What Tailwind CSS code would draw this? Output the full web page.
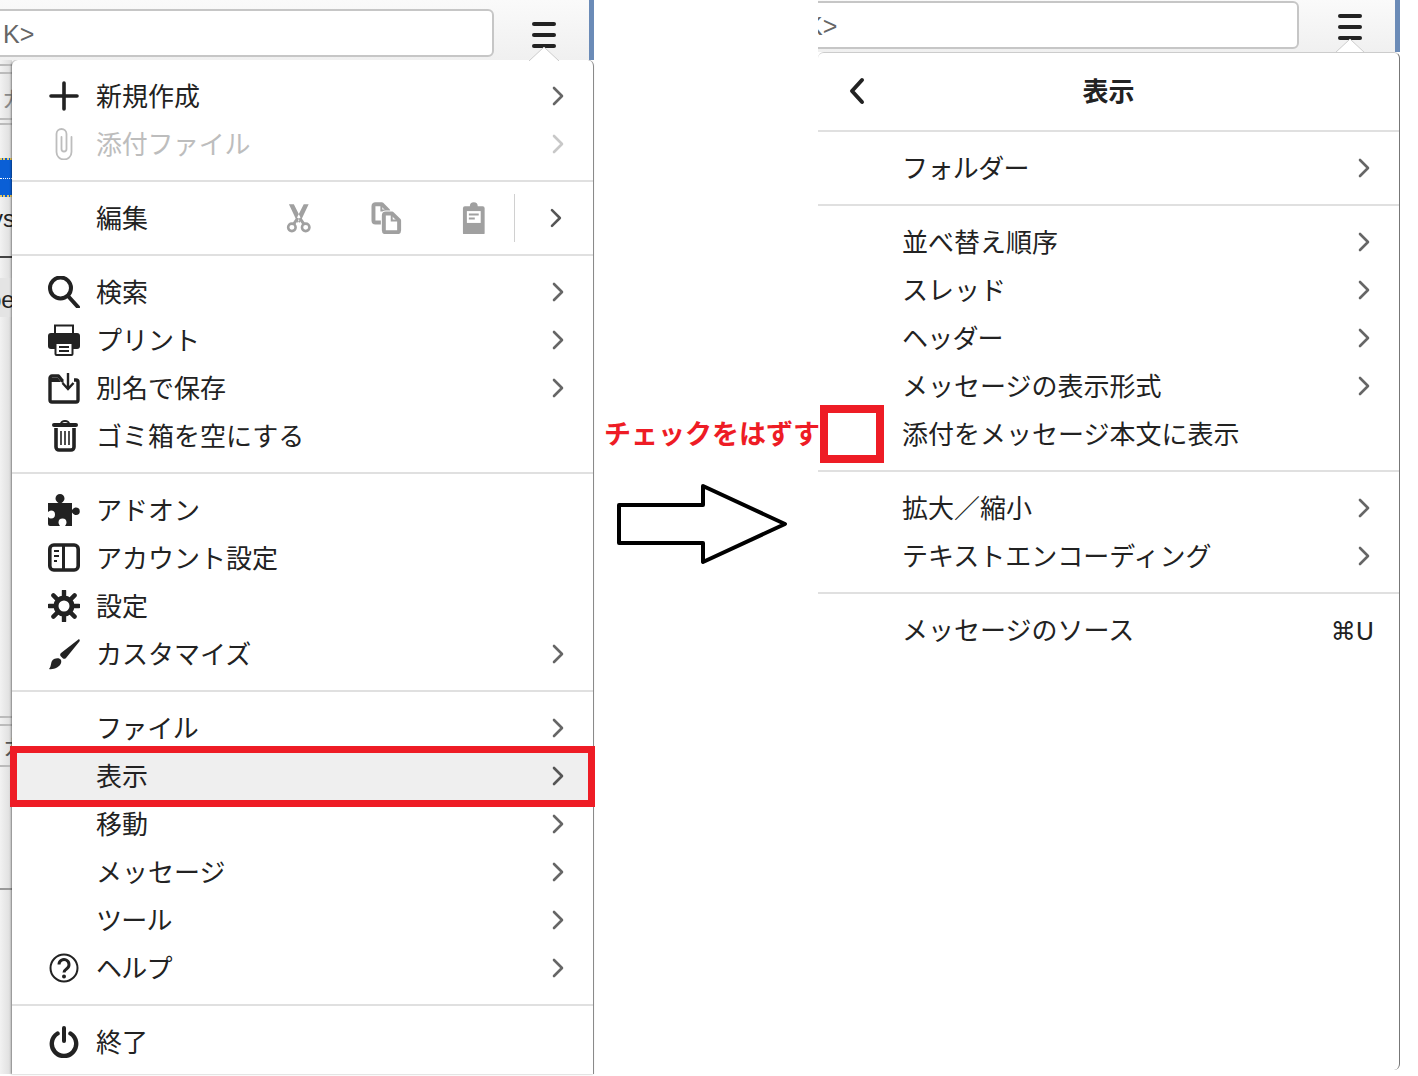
<!DOCTYPE html>
<html lang="ja">
<head>
<meta charset="UTF-8">
<title>表示メニュー</title>
<script src="https://cdn.jsdelivr.net/npm/@tailwindcss/browser@4"></script>
</head>
<body class="bg-white">
<svg class="hidden">
  <symbol id="chev" viewBox="0 0 12 20"><path d="M2 2l8 8-8 8" fill="none" stroke="currentColor" stroke-width="2.6" stroke-linecap="round" stroke-linejoin="round"/></symbol>
</svg>

<div class="w-[1418px] h-[1076px] flex overflow-hidden bg-white text-[#222] text-[26px] font-['Noto_Sans_CJK_JP','Liberation_Sans',sans-serif]">

  <!-- left screenshot -->
  <div class="w-[594px] h-[1074px] flex flex-col shrink-0">
    <div class="relative h-[60px] pt-[9px] flex items-start bg-gradient-to-b from-[#fafafa] to-[#f0f0f0] border-r-[5px] border-[#6b8bb7] z-10">
      <div class="w-[504px] h-[48px] -ml-[10px] pl-[11px] pt-[3px] flex items-center bg-white border-2 border-[#c6c6c6] rounded-md text-[#666] text-[25px] font-['Liberation_Sans',sans-serif]">K&gt;</div>
      <div class="ml-[38px] mt-[13px] w-6 flex flex-col gap-[7px]">
        <span class="h-1 rounded-full bg-[#222]"></span>
        <span class="h-1 rounded-full bg-[#222]"></span>
        <span class="h-1 rounded-full bg-[#222]"></span>
      </div>
      <svg class="absolute left-[529px] top-[46px]" width="30" height="15" viewBox="0 0 30 15"><path d="M0 15L15 1l15 14z" fill="#fff"/><path d="M0 15L15 1l15 14" fill="none" stroke="#ccc"/></svg>
    </div>
    <div class="flex-1 flex min-h-0">
      <!-- what shows of the window behind the menu -->
      <div class="w-3 shrink-0 bg-gradient-to-r from-[#f2f2f2] to-[#dcdcdc] text-[24px] leading-none overflow-hidden flex flex-col text-[#333]">
        <div class="h-[4px]"></div>
        <div class="h-[2px] bg-[#bbb]"></div>
        <div class="h-[6px]"></div>
        <div class="h-[2px] bg-[#bbb]"></div>
        <div class="h-[44px] pt-[12px] pl-[2px] text-[#888] text-[22px] whitespace-nowrap">カ</div>
        <div class="h-[2px] bg-[#bbb]"></div>
        <div class="h-[3px]"></div>
        <div class="h-[2px] bg-[#bbb]"></div>
        <div class="h-[33px]"></div>
        <div class="h-[20px] bg-[#0a5fd6] border-t-2 border-dotted border-[#e8c860]"></div>
        <div class="h-[19px] bg-[#0a5fd6] border-t border-b-2 border-b-[#e8c860] border-t-white border-dotted"></div>
        <div class="h-[59px] pt-[10px] -ml-[9px] font-['Liberation_Sans',sans-serif] font-medium text-[#222] whitespace-nowrap">ys</div>
        <div class="h-[2px] bg-[#444]"></div>
        <div class="h-[20px]"></div>
        <div class="h-[39px] bg-[#e4e4e4] pt-[10px] pl-0 font-['Liberation_Sans',sans-serif] text-[#222] whitespace-nowrap"><span class="-ml-[12px]">pe</span></div>
        <div class="h-[399px]"></div>
        <div class="h-[2px] bg-[#bbb]"></div>
        <div class="h-[6px]"></div>
        <div class="h-[2px] bg-[#bbb]"></div>
        <div class="h-[39px] pl-[3px] pt-[8px] text-[22px] text-[#555] whitespace-nowrap">カ</div>
        <div class="h-[2px] bg-[#bbb]"></div>
        <div class="h-[121px]"></div>
        <div class="h-[2px] bg-[#999]"></div>
      </div>

      <div class="w-[582px] h-full bg-white border-r border-[#8a8a8a] rounded-tl-md rounded-tr-md shadow-[-1px_0_2px_rgba(0,0,0,0.4)] flex flex-col">
        <div class="py-3 border-b-2 border-[#e0e0e0]">
          <div class="flex items-center h-12 pl-9 pr-[29px]">
            <svg class="w-8 h-8 mr-4 shrink-0" viewBox="0 0 32 32"><path d="M16 3v26M3 16h26" stroke="#222" stroke-width="3.6" stroke-linecap="round"/></svg>
            <span class="flex-1 pb-1">新規作成</span>
            <svg class="w-3 h-5 text-[#666]"><use href="#chev"/></svg>
          </div>
          <div class="flex items-center h-12 pl-9 pr-[29px] text-[#bdbdbd]">
            <svg class="w-8 h-8 mr-4 shrink-0" viewBox="0 0 32 32"><path d="M13.500 9v12a2.500 2.500 0 0 0 5 0V6a5 5 0 0 0-10 0v18a7.500 7.500 0 0 0 15 0V9" fill="none" stroke="#bdbdbd" stroke-width="1.800" stroke-linecap="round"/></svg>
            <span class="flex-1 pb-1 tracking-[-0.3px]">添付ファイル</span>
            <svg class="w-3 h-5 text-[#c8c8c8]"><use href="#chev"/></svg>
          </div>
        </div>

        <div class="py-3 border-b-2 border-[#e0e0e0]">
          <div class="flex items-center h-12 pl-[84px] pr-[31px]">
            <span class="w-[190px] pb-1">編集</span>
            <svg class="w-8 h-8" viewBox="0 0 32 32"><g fill="none" stroke="#a0a0a0"><circle cx="9" cy="25.500" r="3.800" stroke-width="2.600"/><circle cx="23" cy="25.500" r="3.800" stroke-width="2.600"/></g><path d="M6 2l5 0 7 14 -3 5zM26 2l-5 0-7 14 3 5z" fill="#a0a0a0"/><path d="M11 22l4-6M21 22l-4-6" stroke="#a0a0a0" stroke-width="3"/></svg>
            <svg class="w-8 h-8 ml-[56px]" viewBox="0 0 32 32"><path d="M4.500 2h6.500l6.500 6.500v10a2 2 0 0 1-2 2h-11a2 2 0 0 1-2-2V4a2 2 0 0 1 2-2z" fill="#fff" stroke="#a0a0a0" stroke-width="4" stroke-linejoin="round"/><path d="M10.500 2v6.500h7" fill="none" stroke="#a0a0a0" stroke-width="2"/><path d="M15 11.500h6.500l7 7v10a2 2 0 0 1-2 2H15a2 2 0 0 1-2-2v-15a2 2 0 0 1 2-2z" fill="#fff" stroke="#fff" stroke-width="6" stroke-linejoin="round"/><path d="M15 11.500h6.500l7 7v10a2 2 0 0 1-2 2H15a2 2 0 0 1-2-2v-15a2 2 0 0 1 2-2z" fill="#fff" stroke="#a0a0a0" stroke-width="4" stroke-linejoin="round"/><path d="M21 12v6.500h7" fill="none" stroke="#a0a0a0" stroke-width="2"/></svg>
            <svg class="w-8 h-8 ml-[55px]" viewBox="0 0 32 32"><path d="M7 4h5a4 4 0 0 1 8 0h5a2 2 0 0 1 2 2v25a2 2 0 0 1-2 2H7a2 2 0 0 1-2-2V6a2 2 0 0 1 2-2z" fill="#a0a0a0"/><rect x="9" y="9" width="14" height="12" fill="#fff"/><path d="M11 12.500h10M11 16.500h6" stroke="#a0a0a0" stroke-width="2"/></svg>
            <span class="w-px h-12 ml-[25px] bg-[#d0d0d0]"></span>
            <svg class="w-3 h-5 ml-[35px] text-[#555]"><use href="#chev"/></svg>
          </div>
        </div>

        <div class="py-3 border-b-2 border-[#e0e0e0]">
          <div class="flex items-center h-12 pl-9 pr-[29px]">
            <svg class="w-8 h-8 mr-4 shrink-0" viewBox="0 0 32 32"><circle cx="12.500" cy="12" r="10.500" fill="none" stroke="#222" stroke-width="4"/><path d="M20 20l10 11" stroke="#222" stroke-width="4" stroke-linecap="round"/></svg>
            <span class="flex-1 pb-1">検索</span>
            <svg class="w-3 h-5 text-[#666]"><use href="#chev"/></svg>
          </div>
          <div class="flex items-center h-12 pl-9 pr-[29px]">
            <svg class="w-8 h-8 mr-4 shrink-0" viewBox="0 0 32 32"><rect x="7" y="1.500" width="18" height="10" fill="none" stroke="#222" stroke-width="2"/><path d="M3 9h26a3 3 0 0 1 3 3v10a3 3 0 0 1-3 3H3a3 3 0 0 1-3-3V12a3 3 0 0 1 3-3z" fill="#222"/><rect x="7.500" y="19" width="17" height="12" rx="1" fill="#fff" stroke="#222" stroke-width="2"/><path d="M11 23h10M11 27h10" stroke="#222" stroke-width="1.800"/></svg>
            <span class="flex-1 pb-1">プリント</span>
            <svg class="w-3 h-5 text-[#666]"><use href="#chev"/></svg>
          </div>
          <div class="flex items-center h-12 pl-9 pr-[29px]">
            <svg class="w-8 h-8 mr-4 shrink-0" viewBox="0 0 32 32"><path d="M15.500 9h-1l-4-5H4a2 2 0 0 0-2 2v22a2 2 0 0 0 2 2h24a2 2 0 0 0 2-2V10a2 2 0 0 0-2-2h-2" fill="none" stroke="#222" stroke-width="3.400" stroke-linejoin="round"/><path d="M2 6h8l3 4H2z" fill="#222"/><path d="M20 1v15M14.500 11l5.500 6 5.500-6" fill="none" stroke="#222" stroke-width="2.400"/></svg>
            <span class="flex-1 pb-1">別名で保存</span>
            <svg class="w-3 h-5 text-[#666]"><use href="#chev"/></svg>
          </div>
          <div class="flex items-center h-12 pl-9 pr-[29px]">
            <svg class="w-8 h-8 mr-4 shrink-0" viewBox="0 0 32 32"><g transform="translate(1 0)"><path d="M5 5h22" stroke="#222" stroke-width="4" stroke-linecap="round"/><path d="M12 4a4 3 0 0 1 8 0" fill="none" stroke="#222" stroke-width="2"/><path d="M7 8v19a3 3 0 0 0 3 3h12a3 3 0 0 0 3-3V8" fill="none" stroke="#222" stroke-width="3.600"/><path d="M12 11v14M16 11v14M20 11v14" stroke="#222" stroke-width="1.600"/></g></svg>
            <span class="flex-1 pb-1">ゴミ箱を空にする</span>
          </div>
        </div>

        <div class="py-3 border-b-2 border-[#e0e0e0]">
          <div class="flex items-center h-12 pl-9 pr-[29px]">
            <svg class="w-8 h-8 mr-4 shrink-0" viewBox="0 0 32 32"><path d="M0 9h10.500c-2-1.500-3-3-3-4.500a4.500 4.500 0 0 1 9 0c0 1.500-1 3-3 4.500H24v7c1.500-2 3-2.500 4-2.500a3.800 3.800 0 0 1 0 7.600c-1 0-2.500-.5-4-2.600V32h-7c1-1.500 1.500-2.500 1.500-3.500a4 4 0 0 0-8 0c0 1 .5 2 1.500 3.500H2a2 2 0 0 1-2-2v-7c1 1 2 1.500 3 1.500a4 4 0 0 0 0-8c-1 0-2 .5-3 1.500z" fill="#222"/></svg>
            <span class="flex-1 pb-1">アドオン</span>
          </div>
          <div class="flex items-center h-12 pl-9 pr-[29px]">
            <svg class="w-8 h-8 mr-4 shrink-0" viewBox="0 0 32 32"><rect x="1.800" y="3" width="28.400" height="25" rx="4" fill="none" stroke="#222" stroke-width="3.600"/><path d="M15.500 3v25" stroke="#222" stroke-width="3"/><path d="M6 9h5M6 14h5M6 19h3" stroke="#222" stroke-width="2"/></svg>
            <span class="flex-1 pb-1">アカウント設定</span>
          </div>
          <div class="flex items-center h-12 pl-9 pr-[29px]">
            <svg class="w-8 h-8 mr-4 shrink-0" viewBox="0 0 32 32"><circle cx="16" cy="16" r="8" fill="none" stroke="#222" stroke-width="5"/><path d="M16 1v6M16 25v6M1 16h6M25 16h6M5.400 5.400l4.200 4.200M22.400 22.400l4.200 4.200M26.600 5.400l-4.200 4.200M9.600 22.400l-4.200 4.200" stroke="#222" stroke-width="4.400" stroke-linecap="round"/></svg>
            <span class="flex-1 pb-1">設定</span>
          </div>
          <div class="flex items-center h-12 pl-9 pr-[29px]">
            <svg class="w-8 h-8 mr-4 shrink-0" viewBox="0 0 32 32"><path d="M31 1c1 1 1 2 0 3L18 20c-1 1-2 1-3 .500l-2.500-2.500c-.5-1-.5-2 .500-3z" fill="#222"/><path d="M1 31c3-3 1-8 5-10 3-1.500 6-1 7 1 1 3-1 6-4 7.500-2.500 1.500-6 2-8 1.500z" fill="#222"/></svg>
            <span class="flex-1 pb-1">カスタマイズ</span>
            <svg class="w-3 h-5 text-[#666]"><use href="#chev"/></svg>
          </div>
        </div>

        <div class="py-3 border-b-2 border-[#e0e0e0]">
          <div class="flex items-center h-12 pl-[84px] pr-[29px]">
            <span class="flex-1 pb-1 tracking-[-0.4px]">ファイル</span>
            <svg class="w-3 h-5 text-[#666]"><use href="#chev"/></svg>
          </div>
          <div class="relative flex items-center h-12 pl-[84px] pr-[29px] bg-[#efefef]">
            <span class="flex-1 pb-1">表示</span>
            <svg class="w-3 h-5 text-[#555]"><use href="#chev"/></svg>
            <div class="absolute -left-[2px] -right-[2px] -top-[6px] -bottom-[7px] border-[7px] border-[#ee1c25] z-10"></div>
          </div>
          <div class="flex items-center h-12 pl-[84px] pr-[29px]">
            <span class="flex-1 pb-1">移動</span>
            <svg class="w-3 h-5 text-[#666]"><use href="#chev"/></svg>
          </div>
          <div class="flex items-center h-12 pl-[84px] pr-[29px]">
            <span class="flex-1 pb-1">メッセージ</span>
            <svg class="w-3 h-5 text-[#666]"><use href="#chev"/></svg>
          </div>
          <div class="flex items-center h-12 pl-[84px] pr-[29px]">
            <span class="flex-1 pb-1 tracking-[-0.8px]">ツール</span>
            <svg class="w-3 h-5 text-[#666]"><use href="#chev"/></svg>
          </div>
          <div class="flex items-center h-12 pl-9 pr-[29px]">
            <svg class="w-8 h-8 mr-4 shrink-0" viewBox="0 0 32 32"><circle cx="16" cy="16" r="13.500" fill="none" stroke="#222" stroke-width="2"/><path d="M11 12.500a5 5 0 1 1 8 4c-2 1.500-3 2.500-3 4" fill="none" stroke="#222" stroke-width="3"/><circle cx="16" cy="24.500" r="2" fill="#222"/></svg>
            <span class="flex-1 pb-1 tracking-[-0.8px]">ヘルプ</span>
            <svg class="w-3 h-5 text-[#666]"><use href="#chev"/></svg>
          </div>
        </div>

        <div class="py-3">
          <div class="flex items-center h-12 pl-9 pr-[29px]">
            <svg class="w-8 h-8 mr-4 shrink-0" viewBox="0 0 32 32"><path d="M9.500 7.500a12.200 12.200 0 1 0 13 0" fill="none" stroke="#222" stroke-width="4.400" stroke-linecap="round"/><path d="M16 2v13" stroke="#222" stroke-width="4" stroke-linecap="round"/></svg>
            <span class="flex-1 pb-1">終了</span>
          </div>
        </div>
      </div>
    </div>
  </div>

  <!-- annotation between the two screenshots -->
  <div class="w-[224px] shrink-0 pt-[413px] flex flex-col">
    <span class="relative z-20 w-[230px] ml-[10px] whitespace-nowrap text-[27px] leading-[40px] font-bold text-[#ee1c25]">チェックをはずす</span>
    <svg class="ml-[22px] mt-[29px]" width="176" height="84" viewBox="0 0 176 84"><path d="M3 23h84V4l82 38-82 38V61H3z" fill="#fff" stroke="#000" stroke-width="4" stroke-linejoin="round"/></svg>
  </div>

  <!-- right screenshot -->
  <div class="w-[582px] h-[1070px] flex flex-col shrink-0">
    <div class="relative h-[52px] pt-[1px] flex items-start overflow-hidden bg-gradient-to-b from-[#fafafa] to-[#f0f0f0] border-r-[5px] border-[#6b8bb7]">
      <div class="w-[490px] h-[48px] -ml-[9px] pt-[3px] flex items-center bg-white border-2 border-[#c6c6c6] rounded-md text-[#666] text-[25px] font-['Liberation_Sans',sans-serif]"><span class="-ml-[5px]">K&gt;</span></div>
      <div class="ml-[39px] mt-[13px] w-6 flex flex-col gap-[7px]">
        <span class="h-1 rounded-full bg-[#222]"></span>
        <span class="h-1 rounded-full bg-[#222]"></span>
        <span class="h-1 rounded-full bg-[#222]"></span>
      </div>
      <svg class="absolute left-[517px] top-[38px]" width="30" height="15" viewBox="0 0 30 15"><path d="M0 15L15 1l15 14z" fill="#fff"/><path d="M0 15L15 1l15 14" fill="none" stroke="#ccc"/></svg>
    </div>
    <div class="flex-1 bg-white border-r border-r-[#777] border-t border-t-[#ccc] rounded-tl-md rounded-tr-md rounded-br-md flex flex-col">
      <div class="relative h-[79px] pb-[5px] flex items-center justify-center border-b-2 border-[#e0e0e0] font-bold">
        <svg class="absolute left-[30px] top-[24px] w-[18px] h-[28px]" viewBox="0 0 18 28"><path d="M14 3L4 14l10 11" fill="none" stroke="#222" stroke-width="4" stroke-linecap="round" stroke-linejoin="round"/></svg>
        <span>表示</span>
      </div>
      <div class="py-3 border-b-2 border-[#e0e0e0]">
        <div class="flex items-center h-12 pl-[84px] pr-[29px]">
          <span class="flex-1 pb-1 tracking-[-0.6px]">フォルダー</span>
          <svg class="w-3 h-5 text-[#666]"><use href="#chev"/></svg>
        </div>
      </div>
      <div class="py-3 border-b-2 border-[#e0e0e0]">
        <div class="flex items-center h-12 pl-[84px] pr-[29px]">
          <span class="flex-1 pb-1">並べ替え順序</span>
          <svg class="w-3 h-5 text-[#666]"><use href="#chev"/></svg>
        </div>
        <div class="flex items-center h-12 pl-[84px] pr-[29px]">
          <span class="flex-1 pb-1">スレッド</span>
          <svg class="w-3 h-5 text-[#666]"><use href="#chev"/></svg>
        </div>
        <div class="flex items-center h-12 pl-[84px] pr-[29px]">
          <span class="flex-1 pb-1 tracking-[-0.8px]">ヘッダー</span>
          <svg class="w-3 h-5 text-[#666]"><use href="#chev"/></svg>
        </div>
        <div class="flex items-center h-12 pl-[84px] pr-[29px]">
          <span class="flex-1 pb-1">メッセージの表示形式</span>
          <svg class="w-3 h-5 text-[#666]"><use href="#chev"/></svg>
        </div>
        <div class="relative flex items-center h-12 pl-[84px] pr-[29px]">
          <div class="absolute left-[2px] -top-[5px] w-16 h-[58px] bg-white border-[8px] border-[#ee1c25]"></div>
          <span class="flex-1 pb-1">添付をメッセージ本文に表示</span>
        </div>
      </div>
      <div class="py-3 border-b-2 border-[#e0e0e0]">
        <div class="flex items-center h-12 pl-[84px] pr-[29px]">
          <span class="flex-1 pb-1">拡大／縮小</span>
          <svg class="w-3 h-5 text-[#666]"><use href="#chev"/></svg>
        </div>
        <div class="flex items-center h-12 pl-[84px] pr-[29px]">
          <span class="flex-1 pb-1">テキストエンコーディング</span>
          <svg class="w-3 h-5 text-[#666]"><use href="#chev"/></svg>
        </div>
      </div>
      <div class="py-3">
        <div class="flex items-center h-12 pl-[84px] pr-[25px]">
          <span class="flex-1 pb-1">メッセージのソース</span>
          <span class="pt-[3px] font-['DejaVu_Sans',sans-serif] text-[25px]">⌘U</span>
        </div>
      </div>
    </div>
  </div>
</div>
</body>
</html>
